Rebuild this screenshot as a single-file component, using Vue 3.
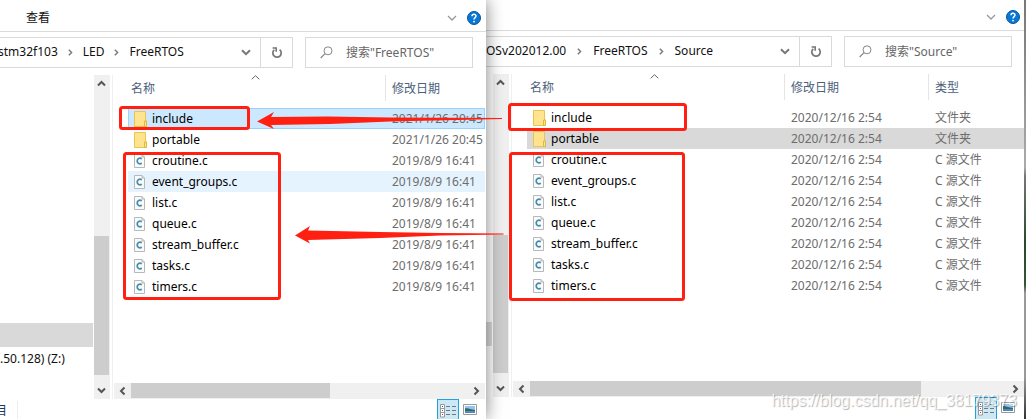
<script setup>
const names = [
  'include', 'portable', 'croutine.c', 'event_groups.c', 'list.c',
  'queue.c', 'stream_buffer.c', 'tasks.c', 'timers.c'
]

const isFolder = (name) => !name.endsWith('.c')

const windows = [
  {
    id: 'project',
    menu: '查看',
    crumbs: ['stm32f103', 'LED', 'FreeRTOS'],
    query: '搜索"FreeRTOS"',
    columns: ['名称', '修改日期'],
    drive: '.50.128) (Z:)',
    count: '目',
    rows: names.map((name, i) => ({
      name,
      date: isFolder(name) ? '2021/1/26 20:45' : '2019/8/9 16:41',
      state: { 0: 'selected', 3: 'hovered' }[i]
    }))
  },
  {
    id: 'source',
    menu: '',
    crumbs: ['OSv202012.00', 'FreeRTOS', 'Source'],
    query: '搜索"Source"',
    columns: ['名称', '修改日期', '类型'],
    drive: '',
    count: '',
    rows: names.map((name, i) => ({
      name,
      date: '2020/12/16 2:54',
      type: isFolder(name) ? '文件夹' : 'C 源文件',
      state: { 1: 'inactive' }[i]
    }))
  }
]
</script>

<template>
  <main class="desktop">
    <section v-for="w in windows" :key="w.id" class="window" :class="w.id">
      <header class="ribbon">
        <button v-if="w.menu" class="menu">{{ w.menu }}</button>
        <button class="icon-btn collapse" aria-label="展开功能区">
          <svg width="10" height="6" viewBox="0 0 10 6"><path d="M1 1l4 4 4-4" fill="none" stroke="#999" stroke-width="1.3" /></svg>
        </button>
        <button class="icon-btn help" aria-label="帮助">
          <svg width="14" height="14" viewBox="0 0 14 14">
            <circle cx="7" cy="7" r="6.5" fill="#0878d4" stroke="#07569c" />
            <path d="M5 5.3c0-2.6 4-2.6 4-.2 0 1.6-2 1.6-2 3.5" fill="none" stroke="#fff" stroke-width="1.5" />
            <circle cx="7" cy="10.6" r=".9" fill="#fff" />
          </svg>
        </button>
      </header>

      <div class="toolbar">
        <div class="address">
          <nav class="crumbs">
            <template v-for="(c, i) in w.crumbs" :key="c">
              <svg v-if="i" class="sep" width="5" height="7" viewBox="0 0 5 7"><path d="M.8 .7l2.8 2.8L.8 6.3" fill="none" stroke="#777" stroke-width="1.4" /></svg>
              <a href="#">{{ c }}</a>
            </template>
          </nav>
          <button class="icon-btn history" aria-label="以前的位置">
            <svg width="10" height="7" viewBox="0 0 10 7"><path d="M1 1.2l4 4 4-4" fill="none" stroke="#777" stroke-width="2" /></svg>
          </button>
          <button class="icon-btn refresh" aria-label="刷新">
            <svg width="12" height="12" viewBox="0 0 12 12">
              <path d="M8.600 2.700a4.200 4.200 0 1 1-5.300.1" fill="none" stroke="#777" stroke-width="1.700" />
              <path d="M1.600 1h3.600v3.700" fill="none" stroke="#777" stroke-width="1.600" />
            </svg>
          </button>
        </div>
        <label class="search">
          <svg width="13" height="13" viewBox="0 0 13 13"><circle cx="8" cy="4.8" r="4" fill="none" stroke="#888" /><path d="M5 7.6L.7 12" stroke="#888" stroke-width="1.2" /></svg>
          <input type="text" :placeholder="w.query" :aria-label="w.query">
        </label>
      </div>

      <div class="body">
        <aside class="tree">
          <div class="tree-current"></div>
          <a v-if="w.drive" class="drive" href="#">{{ w.drive }}</a>
        </aside>
        <div class="vscroll">
          <svg class="arrow" viewBox="0 0 15 17"><path d="M4 10.5l3.5-3.5 3.5 3.5" fill="none" stroke="#555" stroke-width="2" /></svg>
          <div class="vtrack"><div class="vthumb"></div></div>
          <svg class="arrow end" viewBox="0 0 15 24"><path d="M4 13.500l3.500 3.500 3.500-3.500" fill="none" stroke="#555" stroke-width="2" /></svg>
        </div>
        <div class="content">
          <div class="list">
            <table>
              <thead>
                <tr>
                  <th v-for="(c, i) in w.columns" :key="c" scope="col">
                    <div class="head">
                      <svg v-if="i === 0" class="sort" width="9" height="5" viewBox="0 0 9 5"><path d="M.7 4.300L4.500 .7l3.800 3.600" fill="none" stroke="#666" /></svg>
                      {{ c }}
                    </div>
                  </th>
                </tr>
              </thead>
              <tbody>
                <tr v-for="r in w.rows" :key="r.name" :class="r.state">
                  <td>
                    <div class="file">
                      <svg v-if="isFolder(r.name)" width="14" height="16" viewBox="0 0 14 16">
                        <path d="M.5 .5h11v9.500h1v5.500H.5z" fill="#ffe38f" stroke="#e8c54e" />
                        <path d="M10.500 15.500V10h2v5.500z" fill="#ffe38f" stroke="#e0b93c" />
                      </svg>
                      <svg v-else width="14" height="14" viewBox="0 0 14 14">
                        <path d="M.5 .5h7.500l2.500 2.500v10.500H.5z" fill="#fafafa" stroke="#b8b8b8" />
                        <path d="M8 .5v2.500h2.500" fill="none" stroke="#b8b8b8" />
                        <path d="M7.800 4.800C5.600 3.500 3.200 4.500 3.200 7s2.400 3.500 4.600 2.200" fill="none" stroke="#3f8cab" stroke-width="1.700" />
                      </svg>
                      <span>{{ r.name }}</span>
                    </div>
                  </td>
                  <td class="meta">{{ r.date }}</td>
                  <td v-if="r.type" class="meta">{{ r.type }}</td>
                </tr>
              </tbody>
            </table>
          </div>
          <div class="hscroll">
            <svg class="harrow" viewBox="0 0 17 16"><path d="M10.500 4.500L7 8l3.500 3.500" fill="none" stroke="#555" stroke-width="2" /></svg>
            <div class="htrack"><div class="hthumb"></div></div>
            <svg class="harrow" viewBox="0 0 17 16"><path d="M6.500 4.500L10 8l-3.500 3.500" fill="none" stroke="#555" stroke-width="2" /></svg>
          </div>
        </div>
      </div>

      <footer class="status">
        <span v-if="w.count" class="count">{{ w.count }}</span>
        <button class="view active" aria-label="详细信息">
          <svg width="16" height="14" viewBox="0 0 16 14">
            <path d="M.5 .5h4v12.500h-4zM.5 4.500h4M.5 8.500h4" fill="#fff" stroke="#999" />
            <path d="M6 2.500h4M12 2.500h4M6 6.500h4M12 6.500h4M6 10.500h4M12 10.500h4" stroke="#777" />
            <path d="M2 2h1v1H2z" fill="#555" /><path d="M2 6h1v1H2z" fill="#27c" /><path d="M2 10h1v1H2z" fill="#d22" />
          </svg>
        </button>
        <button class="view" aria-label="大图标">
          <svg width="14" height="11" viewBox="0 0 14 11">
            <path d="M.5 .5h13v10H.5z" fill="#fff" stroke="#999" />
            <path d="M2 2h10v7H2z" fill="#8fc4f5" />
            <path d="M2 4.500c3-1 5 1 10 1.500v1.500H2z" fill="#37665c" />
            <path d="M2 7.500h10V9H2z" fill="#4a86c8" />
          </svg>
        </button>
      </footer>
    </section>

    <div class="backdrop"></div>

    <svg class="notes" width="700" height="310" viewBox="0 0 700 310" aria-hidden="true">
      <g fill="none" stroke="#ff2012" stroke-width="3">
        <rect x="120.500" y="107.500" width="128" height="21" rx="2" />
        <rect x="124.500" y="153.500" width="155" height="145" rx="2" />
        <rect x="509.500" y="104.500" width="176" height="25" rx="2" />
        <rect x="510.500" y="153.500" width="173" height="146" rx="2" />
      </g>
      <g fill="#ff2012">
        <path d="M257 121.500L274 112l-3 5 57-.5 62 1 112 .5v1l-112 2.500-60 2.500-59 1 3 4z" />
        <path d="M295 235.500L310 226l-2 4.500 72 1.500 60 1 63.500.5v1l-63.500 1-60 2.500-72 2 2 3.500z" />
      </g>
    </svg>
    <p class="watermark">https://blog.csdn.net/qq_38179373</p>
  </main>
</template>

<style>
body {
  margin: 0;
  overflow: hidden;
}
</style>

<style scoped>
.desktop {
  position: relative;
  display: grid;
  grid-template-columns: 486fr 538fr 2px;
  min-height: 100vh;
  overflow: hidden;
  font: 12px/20px "Noto Sans", "Noto Sans CJK SC", sans-serif;
  color: #111;
}
* {
  box-sizing: border-box;
}
a {
  color: inherit;
  text-decoration: none;
}
button {
  margin: 0;
  padding: 0;
  border: 0;
  background: none;
  font: inherit;
  color: inherit;
}
svg {
  display: block;
  flex: none;
}
.window {
  display: flex;
  flex-direction: column;
  min-width: 0;
  background: #fff;
}
.project {
  position: relative;
  z-index: 1;
  box-shadow: 0 0 16px rgba(0, 0, 0, 0.5);
}
.ribbon {
  display: flex;
  align-items: center;
  height: 32px;
  padding: 4px 5px 0 26px;
  border-bottom: 1px solid #dadbdc;
}
.source .ribbon {
  height: 31px;
  padding-right: 4px;
}
.icon-btn {
  display: flex;
  align-items: center;
  justify-content: center;
}
.collapse {
  margin-left: auto;
  margin-right: 10px;
}
.toolbar {
  display: flex;
  gap: 12px;
  padding: 5px 13px 7px 0;
}
.source .toolbar {
  padding-right: 12px;
}
.address {
  display: flex;
  flex: 1;
  min-width: 0;
  height: 31px;
  border: 1px solid #d9d9d9;
  border-left: 0;
}
.crumbs {
  display: flex;
  flex: 1;
  align-items: center;
  gap: 11px;
  min-width: 0;
  overflow: hidden;
  white-space: nowrap;
  line-height: 27px;
}
.project .crumbs {
  gap: 10px;
  margin-left: -2px;
}
.crumbs a {
  padding-bottom: 2px;
}
.history {
  width: 29px;
}
.refresh {
  width: 32px;
  border-left: 1px solid #d9d9d9;
}
.search {
  display: flex;
  align-items: center;
  gap: 13px;
  width: 168px;
  height: 31px;
  padding-left: 14px;
  border: 1px solid #d9d9d9;
}
.search input {
  width: 110px;
  padding: 0;
  border: 0;
  outline: 0;
  background: none;
  font: inherit;
}
.search input::placeholder {
  color: #666;
  opacity: 1;
}
.body {
  display: flex;
  flex: 1;
  min-height: 0;
}
.tree {
  display: flex;
  flex-direction: column;
  justify-content: flex-end;
  width: 94px;
  padding-bottom: 30px;
  white-space: nowrap;
}
.source .tree {
  width: 7px;
  padding-bottom: 51px;
}
.tree-current {
  height: 24px;
  margin-right: 1px;
  background: #d9d9d9;
}
.drive {
  height: 22px;
  line-height: 24px;
  overflow: hidden;
}
.vscroll {
  display: flex;
  flex-direction: column;
  width: 16px;
  background: #f0f0f0;
}
.arrow {
  width: 15px;
  height: 17px;
}
.arrow.end {
  height: 24px;
}
.vtrack {
  display: flex;
  flex: 1;
  flex-direction: column;
  justify-content: flex-end;
}
.vthumb {
  width: 15px;
  height: 49%;
  background: #cdcdcd;
}
.content {
  display: flex;
  flex: 1;
  flex-direction: column;
  min-width: 0;
  margin: 0 1px 0 2px;
  border-left: 1px solid #f0f0f0;
}
.source .content {
  margin-right: 0;
}
.list {
  flex: 1;
  padding-left: 15px;
  overflow: hidden;
}
table {
  width: 100%;
  table-layout: fixed;
  border-spacing: 0;
}
th {
  width: 144px;
  padding: 0 0 7px;
  text-align: left;
  font-weight: 400;
  color: #4c607a;
}
th:first-child {
  width: 257px;
}
th:last-child {
  width: auto;
}
.head {
  position: relative;
  height: 26px;
  padding-left: 6px;
  border-left: 1px solid #e5e5e5;
  line-height: 28px;
}
th:first-child .head {
  padding-left: 3px;
  border-left: 0;
}
.sort {
  position: absolute;
  top: 0;
  left: calc(50% - 6px);
}
td {
  height: 21px;
  padding: 0;
  line-height: 21px;
  white-space: nowrap;
}
.file {
  display: flex;
  align-items: center;
  gap: 4px;
  height: 21px;
  padding-left: 6px;
  color: #000;
}
.meta {
  padding-left: 7px;
  color: #6d6d6d;
}
.selected {
  background: #cce8ff;
  box-shadow: inset 0 0 0 1px #99d1ff;
}
.hovered {
  background: #e5f3ff;
}
.inactive {
  background: #d9d9d9;
}
.hscroll {
  display: flex;
  height: 16px;
  margin-left: 1px;
  background: #f0f0f0;
}
.harrow {
  width: 17px;
  height: 16px;
}
.htrack {
  flex: 1;
}
.hthumb {
  width: 59%;
  height: 15px;
  background: #cdcdcd;
}
.source .hthumb {
  width: 82%;
}
.status {
  display: flex;
  height: 20px;
  padding-right: 5px;
  overflow: hidden;
}
.source .status {
  height: 22px;
}
.count {
  display: flex;
  justify-content: flex-end;
  width: 18px;
  height: 20px;
  margin-top: 2px;
  padding-right: 10px;
  border-right: 1px solid #eee;
  color: #1e395b;
}
.view {
  display: flex;
  justify-content: center;
  width: 22px;
  height: 23px;
  padding-top: 5px;
}
.view.active {
  margin-left: auto;
  padding-top: 4px;
  border: 1px solid #26a0da;
  background: #cbe8f6;
}
.backdrop {
  background: linear-gradient(#777 0, #aaa 40%, #777 42%, #284a2c 58%, #35543a 68%, #999 70%, #999 90%, #333 100%);
}
.notes {
  position: absolute;
  top: 0;
  left: 0;
  z-index: 2;
  pointer-events: none;
}
.watermark {
  position: absolute;
  right: 9px;
  bottom: 8px;
  z-index: 3;
  margin: 0;
  font: 16px/20px "Liberation Sans", sans-serif;
  color: rgba(255, 255, 255, 0.8);
  text-shadow: 1px 1px 1px rgba(0, 0, 0, 0.3);
}
</style>
